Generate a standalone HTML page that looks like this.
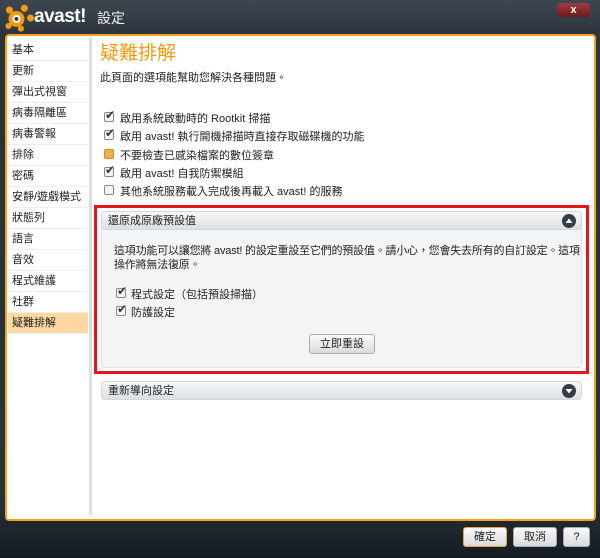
<!DOCTYPE html>
<html><head><meta charset="utf-8"><style>
*{margin:0;padding:0;box-sizing:border-box}
body{width:600px;height:558px;overflow:hidden;font-family:"Liberation Sans","Noto Sans CJK TC",sans-serif;font-size:11px;color:#222;background:linear-gradient(#3d4750,#2a333b 40px,#27313a 500px,#141b22);position:relative}
.abs{position:absolute}
.panel{left:5px;top:34px;width:591px;height:487px;background:#fff;border:2px solid #f4a11a;border-radius:4px}
.side div{position:absolute;left:8px;width:80px;height:21px;line-height:21px;padding-left:4px;border-bottom:1px solid #eee;font-size:11px}
.cb{position:absolute;left:104px;width:10px;height:10px;border:1px solid #888;border-radius:2px;background:#f4f4f4}
.ck::after{content:"✔";position:absolute;left:0px;top:-5px;font-size:12px;color:#333}
.lbl{position:absolute;left:120px;font-size:11px}
.hdr{border-radius:4px;background:linear-gradient(#f6f7f8,#dde0e3);border:1px solid #d4d7da;height:19px;line-height:18px;padding-left:6px;font-size:11px}
.circ{position:absolute;right:5px;top:2px;width:14px;height:14px;border-radius:50%;background:#333d45}
.btn{position:absolute;height:20px;border-radius:3px;background:linear-gradient(#fafafa,#d8dadc);border:1px solid #aaa;text-align:center;line-height:18px;font-size:11px}
</style></head><body>
<svg class="abs" style="left:5px;top:3px" width="30" height="30" viewBox="0 0 34 30"><g fill="#f39c12"><circle cx="13" cy="16" r="9"/><circle cx="5" cy="6" r="4"/><circle cx="22" cy="4" r="4"/><circle cx="29" cy="15" r="4"/><circle cx="18" cy="27" r="3.5"/><circle cx="4" cy="24" r="3.5"/></g><circle cx="13" cy="16" r="4.5" fill="#fff"/><circle cx="13" cy="16" r="2.2" fill="#333"/></svg>
<div class="abs" style="left:34px;top:6px;color:#fff;font-size:19px;font-weight:bold;letter-spacing:-0.5px">avast!</div>
<div class="abs" style="left:97px;top:8px;color:#eee;font-size:14px">設定</div>
<div class="abs" style="left:557px;top:3px;width:33px;height:14px;border-radius:3px;background:linear-gradient(#a33a3f,#6b1b1f);color:#fff;text-align:center;line-height:14px;font-weight:bold;font-size:11px">x</div>
<div class="abs panel"></div>
<div class="abs" style="left:89px;top:37px;width:3px;height:478px;background:#ddd"></div>
<div class="side">
<div style="top:40px">基本</div><div style="top:61px">更新</div><div style="top:82px">彈出式視窗</div><div style="top:103px">病毒隔離區</div><div style="top:124px">病毒警報</div><div style="top:145px">排除</div><div style="top:166px">密碼</div><div style="top:187px">安靜/遊戲模式</div><div style="top:208px">狀態列</div><div style="top:229px">語言</div><div style="top:250px">音效</div><div style="top:271px">程式維護</div><div style="top:292px">社群</div><div style="top:313px;background:#fbd9a0">疑難排解</div>
</div>
<div class="abs" style="left:100px;top:38px;font-size:19px;color:#f39c12">疑難排解</div>
<div class="abs" style="left:100px;top:69px">此頁面的選項能幫助您解決各種問題。</div>
<div class="cb ck" style="top:112px"></div><div class="lbl" style="top:110px">啟用系統啟動時的 Rootkit 掃描</div>
<div class="cb ck" style="top:130px"></div><div class="lbl" style="top:128px">啟用 avast! 執行開機掃描時直接存取磁碟機的功能</div>
<div class="cb" style="top:149px;background:#f0b04a;border-color:#c98a2a"></div><div class="lbl" style="top:147px">不要檢查已感染檔案的數位簽章</div>
<div class="cb ck" style="top:167px"></div><div class="lbl" style="top:165px">啟用 avast! 自我防禦模組</div>
<div class="cb" style="top:185px"></div><div class="lbl" style="top:183px">其他系統服務載入完成後再載入 avast! 的服務</div>
<div class="abs" style="left:94px;top:205px;width:495px;height:169px;border:3px solid #e8141c"></div>
<div class="abs" style="left:101px;top:211px;width:481px;height:157px;background:#f3f4f5;border:1px solid #e0e2e4;border-radius:4px"></div>
<div class="abs hdr" style="left:101px;top:211px;width:481px">還原成原廠預設值<div class="circ"><svg width="14" height="14"><path d="M3.5 9L7 4.5 10.5 9Z" fill="#fff"/></svg></div></div>
<div class="abs" style="left:114px;top:244px;line-height:14px;white-space:nowrap;letter-spacing:-0.2px">這項功能可以讓您將 avast! 的設定重設至它們的預設值。請小心，您會失去所有的自訂設定。這項<br>操作將無法復原。</div>
<div class="cb ck" style="left:116px;top:288px"></div><div class="lbl" style="left:131px;top:286px">程式設定（包括預設掃描）</div>
<div class="cb ck" style="left:116px;top:306px"></div><div class="lbl" style="left:131px;top:304px">防護設定</div>
<div class="btn" style="left:309px;top:334px;width:66px">立即重設</div>
<div class="abs hdr" style="left:101px;top:381px;width:481px">重新導向設定<div class="circ"><svg width="14" height="14"><path d="M3.5 5L7 9.5 10.5 5Z" fill="#fff"/></svg></div></div>
<div class="btn" style="left:463px;top:527px;width:44px;border-color:#e9a62a">確定</div>
<div class="btn" style="left:513px;top:527px;width:44px">取消</div>
<div class="btn" style="left:563px;top:527px;width:27px">?</div>
</body></html>
